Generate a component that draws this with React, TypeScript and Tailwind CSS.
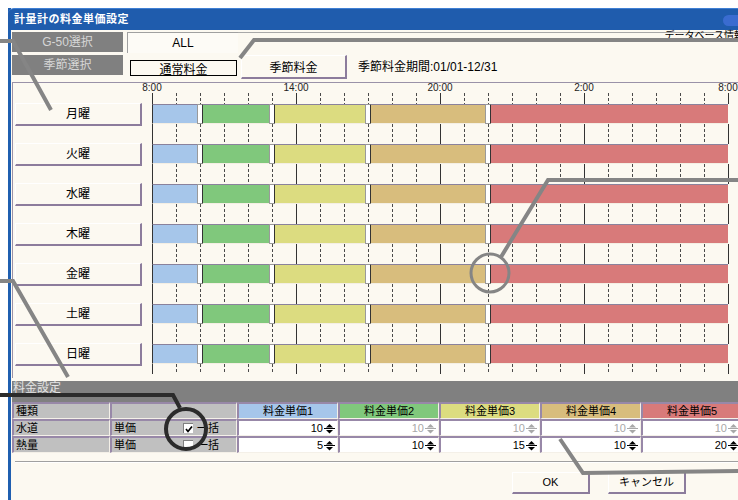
import { Fragment } from "react"

const days = ["月曜", "火曜", "水曜", "木曜", "金曜", "土曜", "日曜"]

// 8:00 -> 10:00 -> 13:00 -> 17:00 -> 22:00 -> 8:00, 24px per hour
const segments = [
  "w-[48px] bg-[#a6c6ea]",
  "w-[72px] bg-[#80c87c]",
  "w-[96px] bg-[#dcdc80]",
  "w-[120px] bg-[#d8bd7d]",
  "w-[240px] bg-[#d87a7a]",
]

const handles = ["left-[45px]", "left-[117px]", "left-[213px]", "left-[333px]"]

const timeLabels = [
  { t: "8:00", pos: "left-[0px]" },
  { t: "14:00", pos: "left-[144px]" },
  { t: "20:00", pos: "left-[288px]" },
  { t: "2:00", pos: "left-[432px]" },
  { t: "8:00", pos: "left-[576px]" },
]

const headers = [
  { t: "料金単価1", c: "bg-[#a6c6ea]" },
  { t: "料金単価2", c: "bg-[#80c87c]" },
  { t: "料金単価3", c: "bg-[#dcdc80]" },
  { t: "料金単価4", c: "bg-[#d8bd7d]" },
  { t: "料金単価5", c: "bg-[#d87a7a]" },
]

const cell =
  "h-[17px] shrink-0 flex items-center border-t-2 border-l-2 border-t-[#9888a8] border-l-[#9888a8] border-r border-b border-r-[#f4f0e8] border-b-[#f4f0e8] text-[11px] leading-none"

function Ticks({ h }: { h: number }) {
  return (
    <svg width={577} height={h} className="block shrink-0">
      {Array.from({ length: 25 }).map((_, k) => {
        const x = k * 24 + 0.5
        const solid = k % 6 === 0
        return (
          <line
            key={k}
            x1={x}
            x2={x}
            y1={0}
            y2={h}
            stroke={solid ? "#333" : "#4a4a4a"}
            strokeDasharray={solid ? undefined : "3 2"}
          />
        )
      })}
    </svg>
  )
}

function Bar() {
  return (
    <div className="relative flex h-[20px] w-[576px] shrink-0">
      {segments.map((s) => (
        <div
          key={s}
          className={`${s} h-full border-l border-l-[#333] border-t border-t-[#8a829c] border-b border-b-[#f4efe4]`}
        />
      ))}
      {handles.map((h) => (
        <div
          key={h}
          className={`absolute ${h} top-0 h-[20px] w-[6px] bg-white border border-[#9a9a9a] border-r-[#333] rounded-[1px]`}
        />
      ))}
    </div>
  )
}

function Spin({ dim }: { dim?: boolean }) {
  const c = dim ? "#a8a8a8" : "#000"
  return (
    <svg width="11" height="13" viewBox="0 0 11 13" className="ml-[1px] shrink-0">
      <path d="M2 5.5 L5.5 2 L9 5.5 Z" fill={c} />
      <line x1="0" y1="6.5" x2="11" y2="6.5" stroke={c} />
      <path d="M2 8 L9 8 L5.5 11.5 Z" fill={c} />
    </svg>
  )
}

function Check({ on }: { on: boolean }) {
  return (
    <span className="w-[10px] h-[10px] shrink-0 bg-white border-t border-l border-[#808080] flex items-center justify-center">
      {on && (
        <svg width="8" height="8">
          <path d="M1 4 L3 6.5 L7 1.5" stroke="#000" strokeWidth="1.7" fill="none" />
        </svg>
      )}
    </span>
  )
}

function ValueCell({ v, dim }: { v: string; dim?: boolean }) {
  return (
    <div className={`${cell} w-[101px] bg-white justify-end pr-[2px]`}>
      <span className={dim ? "text-[#a8a8a8]" : "text-black"}>{v}</span>
      <Spin dim={dim} />
    </div>
  )
}

export default function App() {
  return (
    <div className="relative w-[738px] h-[500px] overflow-hidden bg-white font-['Liberation_Sans','Noto_Sans_CJK_JP',sans-serif] text-black">
      <div className="ml-[8px] mt-[8px] h-[492px] border-l-[3px] border-[#1f5fb0] flex flex-col">
        {/* title bar */}
        <div className="h-[22px] -ml-[3px] pl-[6px] rounded-tl-[6px] bg-[#1f5cad] border-t border-[#3f7fd4] flex items-center">
          <span className="text-[11px] font-bold text-white tracking-[0.5px]">計量計の料金単価設定</span>
          <div className="ml-auto mt-[2px] w-[15px] h-[11px] rounded-l-full bg-[#3a6cd0]" />
        </div>

        <div className="flex-1 bg-[#fcf9f1] pl-[1px] pt-[2px] flex flex-col">
          {/* G-50 row */}
          <div className="flex h-[20px]">
            <div className="w-[111px] bg-[#808080] text-[#d6d6d6] text-[12px] flex items-center justify-center">
              G-50選択
            </div>
            <div className="ml-[4px] w-[111px] h-[21px] border-t border-l border-[#a0a0a0] bg-[#fdfbf6] text-[12px] flex items-center justify-center">
              ALL
            </div>
            <div className="flex-1 border-t border-[#a8a8a8] flex justify-end">
              <span className="mr-[-6px] -mt-[2px] text-[10px] leading-none">データベース情報</span>
            </div>
          </div>

          {/* season row */}
          <div className="flex h-[24px] mt-[3px]">
            <div className="w-[111px] h-[20px] bg-[#808080] text-[#d6d6d6] text-[12px] flex items-center justify-center">
              季節選択
            </div>
            <div className="ml-[7px] mt-[5px] w-[107px] h-[16px] border border-black text-[12px] leading-none flex justify-center pt-[3px] overflow-visible">
              通常料金
            </div>
            <div className="ml-[4px] w-[106px] h-[24px] bg-[#fcf9f1] border-t border-l border-white border-r-2 border-b-2 border-r-[#8c7c9c] border-b-[#8c7c9c] text-[12px] flex items-center justify-center pt-[2px]">
              季節料金
            </div>
            <div className="ml-[11px] text-[12px] flex items-center">季節料金期間:01/01-12/31</div>
          </div>

          {/* timetable */}
          <div className="mt-[3px] h-[296px] border-t border-l border-[#9a92a8] flex flex-col">
            <div className="flex h-[10px]">
              <div className="w-[139px] shrink-0" />
              <div className="relative w-[577px] h-[10px]">
                {timeLabels.map((l, i) => (
                  <span
                    key={i}
                    className={`absolute ${l.pos} top-[0px] -translate-x-1/2 text-[10px] leading-none text-[#222]`}
                  >
                    {l.t}
                  </span>
                ))}
              </div>
            </div>
            <div className="flex">
              <div className="w-[139px] shrink-0" />
              <Ticks h={11} />
            </div>
            {days.map((d, i) => (
              <Fragment key={d}>
                <div className="flex h-[20px] items-center">
                  <div className="w-[139px] shrink-0 pl-[2px]">
                    <div className="-my-[1px] h-[23px] w-[127px] bg-[#fcf9f1] border-t border-l border-white border-r-2 border-b-2 border-r-[#8c7c9c] border-b-[#8c7c9c] text-[12px] flex items-center justify-center">
                      {d}
                    </div>
                  </div>
                  <Bar />
                </div>
                <div className="flex">
                  <div className="w-[139px] shrink-0" />
                  <Ticks h={i === days.length - 1 ? 10 : 20} />
                </div>
              </Fragment>
            ))}
          </div>

          {/* fee settings */}
          <div className="mt-[3px] h-[21px] bg-[#808080] text-[#e4e4e4] text-[12px] leading-none pl-[1px] pt-[1px]">
            料金設定
          </div>
          <div className="flex">
            <div className={`${cell} w-[98px] bg-[#c0c0c0] pl-[2px]`}>種類</div>
            <div className={`${cell} w-[127px] bg-[#c0c0c0]`} />
            {headers.map((h) => (
              <div key={h.t} className={`${cell} w-[101px] ${h.c} justify-center`}>
                {h.t}
              </div>
            ))}
          </div>
          <div className="flex">
            <div className={`${cell} w-[98px] bg-[#c0c0c0] pl-[2px]`}>水道</div>
            <div className={`${cell} w-[127px] bg-[#c0c0c0] pl-[2px]`}>
              <span className="w-[69px]">単価</span>
              <Check on />
              <span className="ml-[4px]">一括</span>
            </div>
            <ValueCell v="10" />
            <ValueCell v="10" dim />
            <ValueCell v="10" dim />
            <ValueCell v="10" dim />
            <ValueCell v="10" dim />
          </div>
          <div className="flex">
            <div className={`${cell} w-[98px] bg-[#c0c0c0] pl-[2px]`}>熱量</div>
            <div className={`${cell} w-[127px] bg-[#c0c0c0] pl-[2px]`}>
              <span className="w-[69px]">単価</span>
              <Check on={false} />
              <span className="ml-[4px]">一括</span>
            </div>
            <ValueCell v="5" />
            <ValueCell v="10" />
            <ValueCell v="15" />
            <ValueCell v="10" />
            <ValueCell v="20" />
          </div>

          <div className="mt-[8px] ml-[3px] h-[2px] border-t border-[#a0a0a0] border-b border-b-white" />

          <div className="mt-[9px] flex pl-[500px] gap-[18px]">
            <div className="w-[78px] h-[22px] bg-[#fcf9f1] border-t border-l border-white border-r-2 border-b-2 border-r-[#8c7c9c] border-b-[#8c7c9c] text-[11px] flex items-center justify-center">
              OK
            </div>
            <div className="w-[78px] h-[22px] bg-[#fcf9f1] border-t border-l border-white border-r-2 border-b-2 border-r-[#8c7c9c] border-b-[#8c7c9c] text-[11px] flex items-center justify-center">
              キャンセル
            </div>
          </div>
        </div>
      </div>

      {/* callout annotations */}
      <svg className="absolute left-0 top-0 pointer-events-none" width="738" height="500">
        <g fill="none" stroke="#858585" strokeWidth="4" strokeLinejoin="miter">
          <polyline points="0,41 13,41 51,110" />
          <polyline points="740,40 254,40 240,58" />
          <polyline points="740,180 548,180 501,257" />
          <circle cx="490" cy="273" r="19" strokeWidth="3" />
          <polyline points="0,281 13,281 68,377" />
          <polyline points="560,439 583,473 740,471" />
        </g>
        <g fill="none" stroke="#2b2b2b" strokeWidth="4">
          <polyline points="0,395 173,395 180,408" />
          <circle cx="186" cy="429" r="20" />
        </g>
      </svg>
    </div>
  )
}
